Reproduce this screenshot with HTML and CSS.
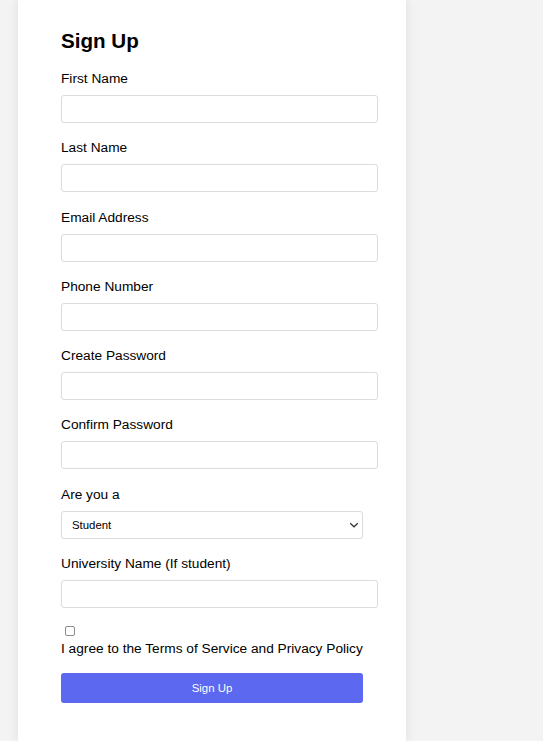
FILE: index.html
```html
<!DOCTYPE html>
<html lang="en">
<head>
<meta charset="utf-8">
<title>Sign Up</title>
<link rel="stylesheet" href="styles.css">
</head>
<body>
<main class="card">
  <h2 class="title">Sign Up</h2>
  <form class="form">
    <div class="field">
      <label class="label" for="fn">First Name</label>
      <input class="input" id="fn" type="text">
    </div>
    <div class="field">
      <label class="label" for="ln">Last Name</label>
      <input class="input" id="ln" type="text">
    </div>
    <div class="field">
      <label class="label" for="em">Email Address</label>
      <input class="input" id="em" type="email">
    </div>
    <div class="field">
      <label class="label" for="ph">Phone Number</label>
      <input class="input" id="ph" type="tel">
    </div>
    <div class="field">
      <label class="label" for="pw">Create Password</label>
      <input class="input" id="pw" type="password">
    </div>
    <div class="field">
      <label class="label" for="cpw">Confirm Password</label>
      <input class="input" id="cpw" type="password">
    </div>
    <div class="field">
      <label class="label" for="role">Are you a</label>
      <div class="select-wrap">
        <select class="select" id="role">
          <option>Student</option>
          <option>Professional</option>
        </select>
        <svg class="chevron" width="10" height="6" viewBox="0 0 10 6"><path d="M1.2 1.2l3.8 3.6 3.8-3.6" fill="none" stroke="#333" stroke-width="1.2"/></svg>
      </div>
    </div>
    <div class="field">
      <label class="label" for="uni">University Name (If student)</label>
      <input class="input" id="uni" type="text">
    </div>
    <div class="agree">
      <input class="check" id="agree" type="checkbox">
      <label class="agree-label" for="agree">I agree to the Terms of Service and Privacy Policy</label>
    </div>
    <button class="btn" type="button">Sign Up</button>
  </form>
</main>
</body>
</html>
```

FILE: styles.css
```css
html, body {
  margin: 0;
  padding: 0;
  background: #f3f3f3;
  font-family: "Liberation Sans", Arial, Helvetica, sans-serif;
  color: #000;
  height: 100%;
}

.card {
  box-sizing: border-box;
  width: 388px;
  min-height: 100%;
  margin-left: 18px;
  padding: 29px 42px 30px 43px;
  background: #fff;
  box-shadow: 0 0 10px rgba(0, 0, 0, 0.09);
}

.title {
  margin: 0 0 18px;
  font-size: 20.6px;
  font-weight: bold;
  line-height: 24px;
}

.form {
  display: flex;
  flex-direction: column;
  width: 302px;
}

.field {
  display: flex;
  flex-direction: column;
  margin-bottom: 17.3px;
}

.label {
  font-size: 13.7px;
  line-height: 16px;
  margin-bottom: 8px;
}

.input {
  box-sizing: border-box;
  width: 317px;
  height: 28px;
  border: 1px solid #dcdcdc;
  border-radius: 3px;
  background: #fff;
  padding: 0 7px;
  font: inherit;
  font-size: 11.4px;
  outline: none;
}

.select-wrap {
  position: relative;
  width: 302px;
}

.select {
  box-sizing: border-box;
  width: 302px;
  height: 28px;
  appearance: none;
  -webkit-appearance: none;
  border: 1px solid #dcdcdc;
  border-radius: 3px;
  background: #fff;
  padding: 0 10px;
  font-family: "Liberation Sans", Arial, sans-serif;
  font-size: 11.4px;
  color: #000;
  outline: none;
}

.chevron {
  position: absolute;
  right: 4px;
  top: 11px;
  pointer-events: none;
}

.agree {
  display: flex;
  flex-direction: column;
  align-items: flex-start;
  margin-bottom: 16px;
}

.check {
  appearance: none;
  -webkit-appearance: none;
  box-sizing: border-box;
  width: 10px;
  height: 10px;
  margin: 1px 0 5px 3.5px;
  border: 1px solid #8c8c8c;
  border-radius: 2px;
  background: #fff;
}

.agree-label {
  font-size: 13.7px;
  line-height: 16px;
}

.btn {
  width: 302px;
  height: 30px;
  border: none;
  border-radius: 3px;
  background: #5c68f0;
  color: #fff;
  font-family: "Liberation Sans", Arial, sans-serif;
  font-size: 11.4px;
  cursor: pointer;
}
```
